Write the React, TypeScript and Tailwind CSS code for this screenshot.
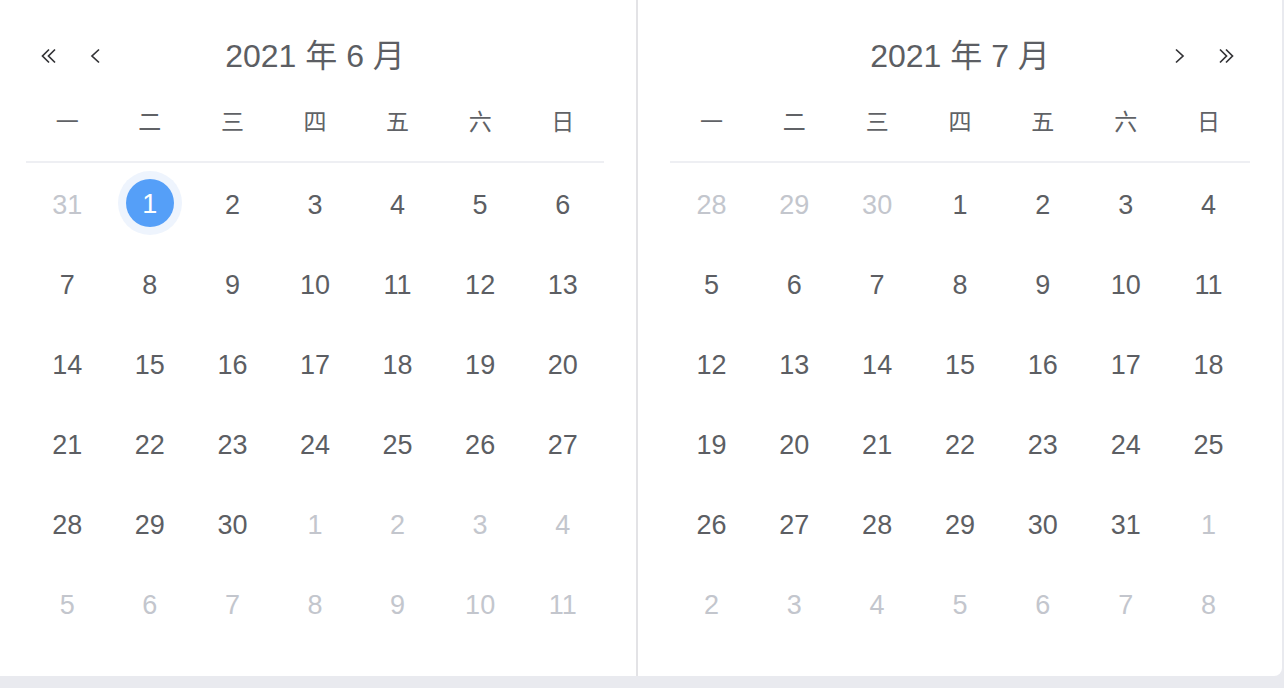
const font = "font-['Liberation_Sans','Noto_Sans_CJK_SC',sans-serif]"

const WEEK = ["一", "二", "三", "四", "五", "六", "日"]

type Day = { n: number; muted?: boolean; active?: boolean }

function buildDays(prevTail: number[], count: number, nextCount: number, active?: number): Day[] {
  const days: Day[] = prevTail.map((n) => ({ n, muted: true }))
  for (let i = 1; i <= count; i++) days.push({ n: i, active: i === active })
  for (let i = 1; i <= nextCount; i++) days.push({ n: i, muted: true })
  return days
}

const june = buildDays([31], 30, 11, 1)
const july = buildDays([28, 29, 30], 31, 8)

function Chevron({ dir }: { dir: "left" | "right" }) {
  return (
    <svg width="11" height="16" viewBox="0 0 11 16" fill="none">
      <path
        d={dir === "left" ? "M9 1.5L2 8L9 14.5" : "M2 1.5L9 8L2 14.5"}
        stroke="#333336"
        strokeWidth="1.7"
      />
    </svg>
  )
}

function DoubleChevron({ dir }: { dir: "left" | "right" }) {
  return (
    <svg width="19" height="16" viewBox="0 0 19 16" fill="none">
      {dir === "left" ? (
        <>
          <path d="M9 1.5L2.5 8L9 14.5" stroke="#333336" strokeWidth="1.7" />
          <path d="M15 1.5L8.5 8L15 14.5" stroke="#333336" strokeWidth="1.7" />
        </>
      ) : (
        <>
          <path d="M4 1.5L10.5 8L4 14.5" stroke="#333336" strokeWidth="1.7" />
          <path d="M10 1.5L16.5 8L10 14.5" stroke="#333336" strokeWidth="1.7" />
        </>
      )}
    </svg>
  )
}

function Month({ title, days, side }: { title: string; days: Day[]; side: "left" | "right" }) {
  return (
    <div className="flex flex-col">
      {/* header */}
      <div className="flex h-[110px] items-center pt-[1px]">
        <div className="flex w-[110px] items-center gap-[31px] pl-[14px]">
          {side === "left" && (
            <>
              <DoubleChevron dir="left" />
              <Chevron dir="left" />
            </>
          )}
        </div>
        <div className="flex-1 text-center text-[32px] text-[#5c5e63]">{title}</div>
        <div className="flex w-[110px] items-center justify-end gap-[31px] pr-[15px]">
          {side === "right" && (
            <>
              <Chevron dir="right" />
              <DoubleChevron dir="right" />
            </>
          )}
        </div>
      </div>

      {/* weekdays */}
      <div className="grid grid-cols-7 border-b-2 border-[#eeeff3] pb-[27px]">
        {WEEK.map((w) => (
          <div key={w} className="flex h-[24px] items-center justify-center text-[23px] text-[#606266]">
            {w}
          </div>
        ))}
      </div>

      {/* days */}
      <div className="grid grid-cols-7">
        {days.map((d, i) => (
          <div key={i} className="flex h-[80px] items-center justify-center">
            {d.active ? (
              <div className="flex h-[64px] w-[64px] items-center justify-center rounded-full bg-[#eef4fd]">
                <div className="flex h-[48px] w-[48px] items-center justify-center rounded-full bg-[#559ff8] pt-[2px] text-[27px] text-white">
                  {d.n}
                </div>
              </div>
            ) : (
              <span className={d.muted ? "pt-[4px] text-[27px] text-[#c3c6cd]" : "pt-[4px] text-[27px] text-[#5c5e63]"}>
                {d.n}
              </span>
            )}
          </div>
        ))}
      </div>
    </div>
  )
}

export default function App() {
  return (
    <div className={`h-[688px] w-full bg-[#e9eaef] ${font}`}>
      <div className="flex h-[676px] w-[1282px] rounded-br-lg bg-white">
        <div className="w-[638px] border-r-2 border-[#e3e3e6] pl-[26px] pr-[32px]">
          <Month title="2021 年 6 月" days={june} side="left" />
        </div>
        <div className="flex-1 px-[32px]">
          <Month title="2021 年 7 月" days={july} side="right" />
        </div>
      </div>
    </div>
  )
}
